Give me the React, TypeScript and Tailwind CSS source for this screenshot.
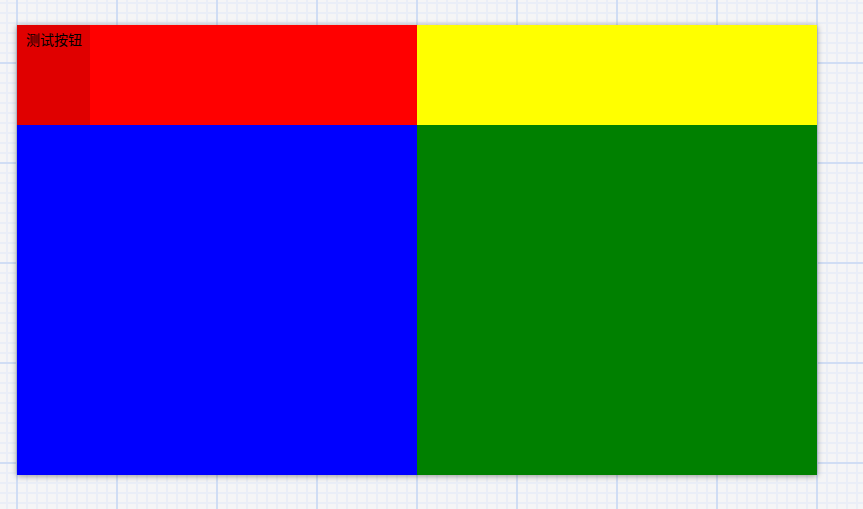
export default function App() {
  return (
    <div className="h-[509px] w-full overflow-hidden bg-[#f5f5f6] pl-[17px] pt-[25px] [background-image:linear-gradient(to_right,#d0ddf4_2px,transparent_2px),linear-gradient(to_bottom,#d0ddf4_2px,transparent_2px),linear-gradient(to_right,#eaeef7_2px,transparent_2px),linear-gradient(to_bottom,#eaeef7_2px,transparent_2px)] [background-size:100px_100px,100px_100px,10px_10px,10px_10px] [background-position:16px_62px,16px_62px,6px_2px,6px_2px]">
      <div className="grid h-[450px] w-[800px] grid-cols-2 grid-rows-[100px_350px] shadow-[0_1px_6px_rgba(0,0,0,0.4)]">
        <div className="flex bg-[#ff0000]">
          <div className="w-[73px] bg-[#e00000] pl-[9px] pt-[5px] text-[14px] leading-[18px] text-black [font-family:'Noto_Sans_CJK_SC',sans-serif]">
            测试按钮
          </div>
        </div>
        <div className="bg-[#ffff00]" />
        <div className="bg-[#0000ff]" />
        <div className="bg-[#008000]" />
      </div>
    </div>
  )
}
